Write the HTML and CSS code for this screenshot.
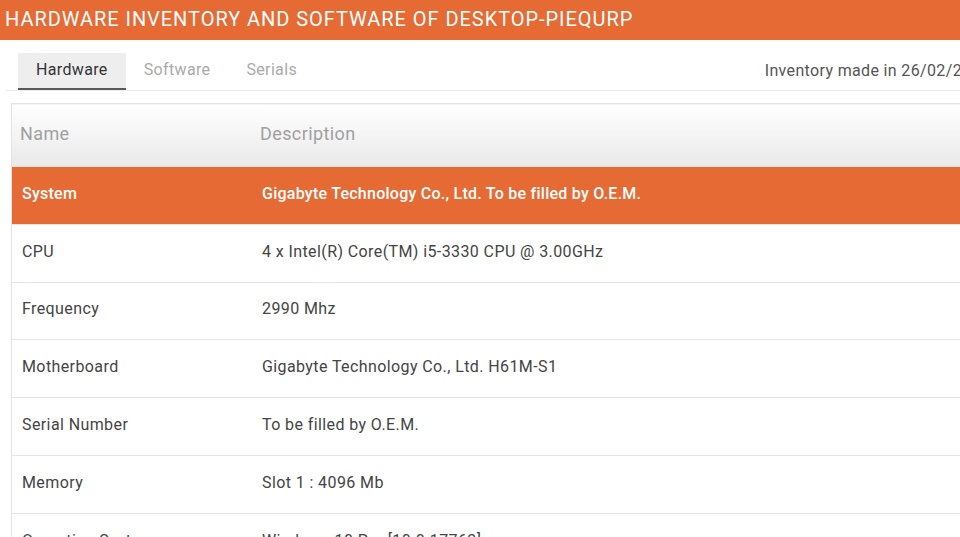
FILE: index.html
```html
<!DOCTYPE html>
<html>
<head>
<meta charset="utf-8">
<link rel="stylesheet" href="styles.css">
</head>
<body>
<div class="page">
  <header class="topbar">HARDWARE INVENTORY AND SOFTWARE OF DESKTOP-PIEQURP</header>
  <div class="toolbar">
    <nav class="tabs">
      <span class="tab active">Hardware</span>
      <span class="tab">Software</span>
      <span class="tab">Serials</span>
    </nav>
    <div class="made">Inventory made in 26/02/2019</div>
  </div>
  <table class="inv">
    <thead>
      <tr><th class="c1">Name</th><th>Description</th></tr>
    </thead>
    <tbody>
      <tr class="sel"><td class="c1">System</td><td class="c2">Gigabyte Technology Co., Ltd. To be filled by O.E.M.</td></tr>
      <tr><td class="c1">CPU</td><td class="c2">4 x Intel(R) Core(TM) i5-3330 CPU @ 3.00GHz</td></tr>
      <tr><td class="c1">Frequency</td><td class="c2">2990 Mhz</td></tr>
      <tr><td class="c1">Motherboard</td><td class="c2">Gigabyte Technology Co., Ltd. H61M-S1</td></tr>
      <tr><td class="c1">Serial Number</td><td class="c2">To be filled by O.E.M.</td></tr>
      <tr><td class="c1">Memory</td><td class="c2">Slot 1 : 4096 Mb</td></tr>
      <tr><td class="c1">Operating System</td><td class="c2">Windows 10 Pro [10.0.17763]</td></tr>
    </tbody>
  </table>
</div>
</body>
</html>
```
FILE: styles.css
```css
html, body {
  margin: 0;
  padding: 0;
  overflow: hidden;
  height: 537px;
  background: #fff;
}
body {
  font-family: Roboto, "Liberation Sans", sans-serif;
  color: #444;
}
.page {
  width: 1010px;
}
.topbar {
  background: #e66a34;
  color: #fff;
  height: 40px;
  line-height: 38px;
  font-size: 20px;
  letter-spacing: 0.95px;
  padding-left: 5px;
  white-space: nowrap;
}
.toolbar {
  display: flex;
  align-items: flex-end;
  justify-content: space-between;
  margin: 13px 0 0 6px;
  padding-right: 20px;
  border-bottom: 1px solid #ebebeb;
}
.tabs {
  display: flex;
  padding-left: 12px;
}
.tab {
  font-size: 16px;
  letter-spacing: 0.35px;
  color: #aaa;
  padding: 0 18px;
  height: 35px;
  line-height: 34px;
  border-bottom: 2px solid transparent;
}
.tab.active {
  background: #eeeeee;
  color: #333;
  border-bottom-color: #5a5a5a;
}
.made {
  font-size: 16px;
  letter-spacing: 0.35px;
  color: #555;
  line-height: 35px;
  padding-bottom: 2px;
  white-space: nowrap;
}
.inv {
  margin: 12px 0 0 11px;
  width: 1000px;
  border-collapse: collapse;
  border: 1px solid #e3e3e3;
  font-size: 16px;
  letter-spacing: 0.4px;
}
.inv th {
  text-align: left;
  font-weight: normal;
  font-size: 18px;
  letter-spacing: 0.4px;
  color: #a0a0a0;
  height: 59px;
  padding: 0 0 3px 0;
  background: linear-gradient(#ffffff, #e9e9e9);
  border-bottom: 1px solid #e0e0e0;
}
.inv th.c1 {
  padding-left: 8px;
  width: 240px;
}
.inv td {
  height: 52.8px;
  padding: 0 0 4px 0;
  border-bottom: 1px solid #e5e5e5;
  color: #444;
}
.inv td.c1 {
  padding-left: 10px;
}
.inv td.c2 {
  padding-left: 2px;
}
.inv tr.sel td {
  background: #e66a34;
  color: #fff;
  font-weight: 500;
  letter-spacing: 0.25px;
}
```
